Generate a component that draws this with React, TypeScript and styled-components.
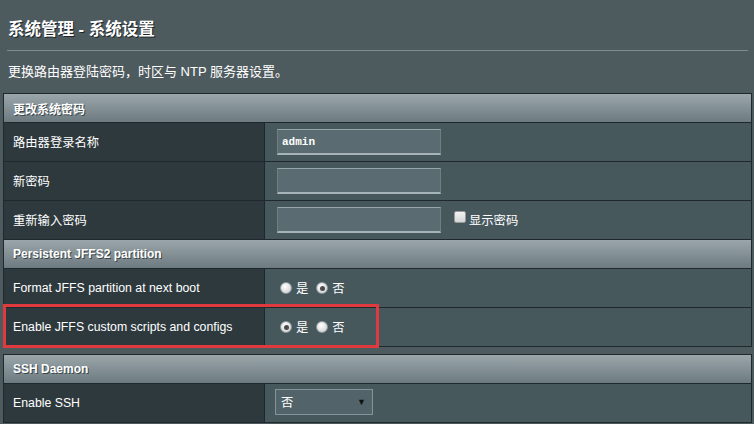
import React from "react";
import styled, { createGlobalStyle } from "styled-components";

const Global = createGlobalStyle`
  html, body { margin: 0; padding: 0; background: #4d5a5e; }
  body {
    font-family: "Liberation Sans", Arial, "Noto Sans CJK SC", sans-serif;
    color: #ffffff;
  }
  * { box-sizing: border-box; }
`;

const Page = styled.div`
  width: 754px;
  height: 424px;
  overflow: hidden;
  background: #4d5a5e;
  padding: 18px 2px 0 3px;
`;

const Title = styled.div`
  font-size: 16.5px;
  font-weight: bold;
  line-height: 22px;
  margin-left: 5px;
  text-shadow: 1px 1px 0 #1c2427;
`;

const Rule = styled.div`
  height: 1px;
  background: #7f8c90;
  margin: 10px 4px 0 4px;
`;

const Desc = styled.div`
  font-size: 13px;
  line-height: 18px;
  margin: 12px 0 0 5px;
`;

const Table = styled.div<{ $gap: number }>`
  margin-top: ${(p) => p.$gap}px;
  border: 1px solid #1f282b;
  display: flex;
  flex-direction: column;
`;

const Header = styled.div`
  height: 29px;
  border-bottom: 1px solid #1f282b;
  background: linear-gradient(#9aa6aa, #6d7a7f);
  display: flex;
  align-items: center;
  padding-left: 9px;
  font-size: 12px;
  font-weight: bold;
  text-shadow: 1px 1px 0 #3a4548;
`;

const Row = styled.div<{ $last?: boolean }>`
  position: relative;
  height: ${(p) => (p.$last ? 38 : 39)}px;
  border-bottom: ${(p) => (p.$last ? "none" : "1px solid #1f282b")};
  display: grid;
  grid-template-columns: 261px 1fr;
`;

const Label = styled.div`
  background: #2e393d;
  border-right: 1px solid #1f282b;
  display: flex;
  align-items: center;
  padding-left: 9px;
  font-size: 12.3px;
`;

const Value = styled.div`
  background: #47585d;
  display: flex;
  align-items: center;
  padding-left: 12px;
  font-size: 12.3px;
`;

const TextInput = styled.div`
  width: 164px;
  height: 26px;
  background: #5a6c71;
  border: 1px solid #6d7f84;
  border-top-color: #97a5a8;
  border-bottom: 2px solid #a7b4b7;
  display: flex;
  align-items: center;
  padding-left: 4px;
  font-family: "Liberation Mono", monospace;
  font-size: 11px;
  font-weight: bold;
  color: #ffffff;
`;

const Checkbox = styled.span`
  width: 12px;
  height: 12px;
  margin: -6px 3px 0 13px;
  background: linear-gradient(#f2f2f2, #d6d6d6);
  border: 1px solid #9a9a9a;
  border-radius: 2px;
`;

const RadioDot = styled.span<{ $on?: boolean; $first?: boolean }>`
  width: 12px;
  height: 12px;
  border-radius: 50%;
  margin-left: ${(p) => (p.$first ? 3 : 8)}px;
  margin-right: 4px;
  background: radial-gradient(circle at 40% 35%, #ffffff, #c9c9c9);
  border: 1px solid #8f9a9e;
  display: flex;
  align-items: center;
  justify-content: center;
  &::after {
    content: "";
    width: 5px;
    height: 5px;
    border-radius: 50%;
    background: ${(p) => (p.$on ? "#4b4b4b" : "transparent")};
  }
`;

const Select = styled.div`
  width: 98px;
  height: 26px;
  margin-left: -2px;
  margin-top: -2px;
  background: #52646a;
  border: 1px solid #83959a;
  display: flex;
  align-items: center;
  justify-content: space-between;
  padding: 0 6px 0 5px;
  font-size: 12.3px;
`;

const Arrow = styled.span`
  font-size: 9px;
  color: #111;
`;

const Highlight = styled.div`
  position: absolute;
  top: -4px;
  left: -1px;
  width: 376px;
  height: 44px;
  border: 3px solid #e03a3e;
  pointer-events: none;
`;

const Radios: React.FC<{ yes: boolean }> = ({ yes }) => (
  <>
    <RadioDot $first $on={yes} />
    <span>是</span>
    <RadioDot $on={!yes} />
    <span>否</span>
  </>
);

export default function App() {
  return (
    <>
      <Global />
      <Page>
        <Title>系统管理 - 系统设置</Title>
        <Rule />
        <Desc>更换路由器登陆密码，时区与 NTP 服务器设置。</Desc>
        <Table $gap={12}>
          <Header>更改系统密码</Header>
          <Row>
            <Label>路由器登录名称</Label>
            <Value>
              <TextInput>admin</TextInput>
            </Value>
          </Row>
          <Row>
            <Label>新密码</Label>
            <Value>
              <TextInput />
            </Value>
          </Row>
          <Row>
            <Label>重新输入密码</Label>
            <Value>
              <TextInput />
              <Checkbox />
              <span>显示密码</span>
            </Value>
          </Row>
          <Header>Persistent JFFS2 partition</Header>
          <Row>
            <Label>Format JFFS partition at next boot</Label>
            <Value>
              <Radios yes={false} />
            </Value>
          </Row>
          <Row $last>
            <Label>Enable JFFS custom scripts and configs</Label>
            <Value>
              <Radios yes={true} />
            </Value>
            <Highlight />
          </Row>
        </Table>
        <Table $gap={7}>
          <Header>SSH Daemon</Header>
          <Row $last>
            <Label>Enable SSH</Label>
            <Value>
              <Select>
                <span>否</span>
                <Arrow>▼</Arrow>
              </Select>
            </Value>
          </Row>
        </Table>
      </Page>
    </>
  );
}
